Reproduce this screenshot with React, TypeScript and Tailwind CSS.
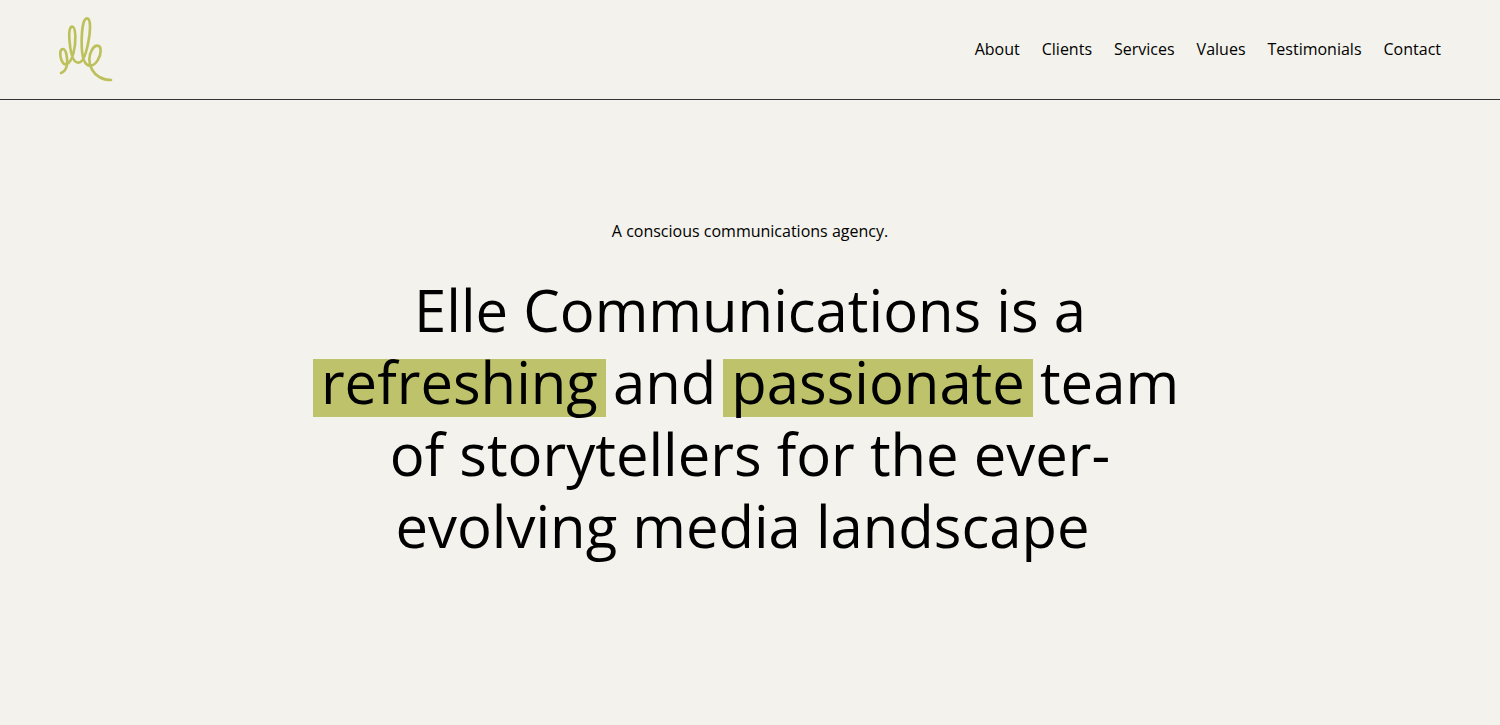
import React from "react";

const links = ["About", "Clients", "Services", "Values", "Testimonials", "Contact"];

const Logo: React.FC = () => (
  <svg viewBox="27 18 159 195" className="h-[65px] w-[53px] overflow-visible" fill="none" aria-hidden="true">
    <path
      d="M33 189C42 186 49 177 51 164C53 148 49 117 39 117C29 117 29 136 34 149C39 162 45 165 51 162C68 154 77 112 76 78C75 59 73 50 67 50C58 50 56 68 59 96C62 132 69 158 85 158C101 158 112 118 118 78C122 46 120 25 111 25C100 25 95 57 95 98C95 138 102 167 121 167C139 167 152 138 152 122C152 112 147 107 141 107C130 107 119 128 118 147C117 170 131 192 148 201C160 208 172 210 183 210"
      stroke="#bdc15b"
      strokeWidth="8"
      strokeLinecap="round"
      strokeLinejoin="round"
    />
  </svg>
);

const Mark: React.FC<{ children: React.ReactNode }> = ({ children }) => (
  <span className="-mx-2 inline-block h-[58px] bg-[#bec26a] px-2 leading-[46px]">{children}</span>
);

const App: React.FC = () => {
  return (
    <div className="min-h-screen bg-[#f3f2ec] font-['Open_Sans',sans-serif] text-black">
      {/* Header */}
      <header className="flex h-[100px] items-center justify-between border-b border-[#333333] px-[59px] pb-0.5">
        <a href="#" aria-label="Elle Communications">
          <Logo />
        </a>
        <nav className="flex gap-[22px] text-base">
          {links.map((link) => (
            <a key={link} href={`#${link.toLowerCase()}`}>
              {link}
            </a>
          ))}
        </nav>
      </header>

      {/* Hero */}
      <main className="px-6 pt-[119px] text-center">
        <p className="text-base">A conscious communications agency.</p>
        <h1 className="mt-[31px] text-[58px] leading-[72px]">
          Elle Communications is a
          <br />
          <Mark>refreshing</Mark> and <Mark>passionate</Mark> team
          <br />
          of storytellers for the ever-
          <br />
          evolving media landscape&nbsp;
        </h1>
      </main>
    </div>
  );
};

export default App;
